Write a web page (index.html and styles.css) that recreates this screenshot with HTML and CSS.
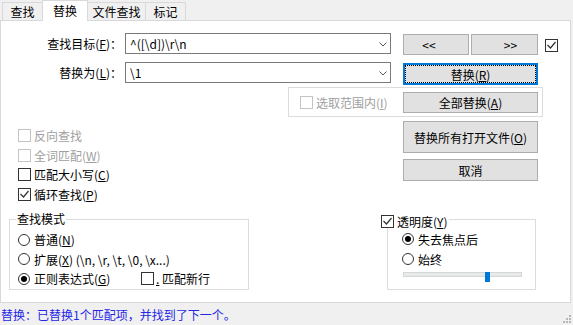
FILE: index.html
```html
<!DOCTYPE html>
<html lang="zh-CN">
<head>
    <meta charset="UTF-8">
    <title>替换</title>
    <link rel="stylesheet" href="styles.css">
</head>
<body>

<div class="tabs">
    <div class="tab tab-find">查找</div>
    <div class="tab tab-replace active">替换</div>
    <div class="tab tab-files">文件查找</div>
    <div class="tab tab-mark">标记</div>
</div>

<div class="panel">
    <div class="row row-find">
        <label class="field-label">查找目标(<u>F</u>)：</label>
        <div class="combo">
            <span class="combo-text">^([\d])\r\n</span>
            <svg class="chevron" width="8" height="5" viewBox="0 0 8 5"><polyline points="0.5,0.5 4,4 7.5,0.5" fill="none" stroke="#555" stroke-width="1"/></svg>
        </div>
        <button class="btn btn-prev">&lt;&lt;</button>
        <button class="btn btn-next">&gt;&gt;</button>
        <span class="box nav-check">
            <svg width="11" height="11" viewBox="0 0 11 11"><polyline points="1.5,5 4.5,8 9.5,2" fill="none" stroke="#333" stroke-width="1.2"/></svg>
        </span>
    </div>

    <div class="row row-replace">
        <label class="field-label">替换为(<u>L</u>)：</label>
        <div class="combo">
            <span class="combo-text">\1</span>
            <svg class="chevron" width="8" height="5" viewBox="0 0 8 5"><polyline points="0.5,0.5 4,4 7.5,0.5" fill="none" stroke="#555" stroke-width="1"/></svg>
        </div>
        <button class="btn btn-replace">替换(<u>R</u>)</button>
    </div>

    <div class="main">
        <div class="left">
            <div class="check-row disabled"><span class="box"></span>反向查找</div>
            <div class="check-row disabled"><span class="box"></span>全词匹配(<u>W</u>)</div>
            <div class="check-row"><span class="box"></span>匹配大小写(<u>C</u>)</div>
            <div class="check-row">
                <span class="box"><svg width="11" height="11" viewBox="0 0 11 11"><polyline points="1.5,5 4.5,8 9.5,2" fill="none" stroke="#333" stroke-width="1.2"/></svg></span>循环查找(<u>P</u>)
            </div>

            <div class="group-title">查找模式</div>
            <div class="mode-box">
                <div class="opt-row"><span class="radio"></span>普通(<u>N</u>)</div>
                <div class="opt-row"><span class="radio"></span>扩展(<u>X</u>) (\n, \r, \t, \0, \x...)</div>
                <div class="opt-row">
                    <span class="opt-regex"><span class="radio on"></span>正则表达式(<u>G</u>)</span>
                    <span class="box box-newline"></span><u>.</u>&nbsp;匹配新行
                </div>
            </div>
        </div>

        <div class="right">
            <div class="range-box">
                <span class="range-check disabled"><span class="box"></span>选取范围内(<u>I</u>)</span>
                <button class="btn btn-all">全部替换(<u>A</u>)</button>
            </div>
            <button class="btn btn-openall">替换所有打开文件(<u>O</u>)</button>
            <button class="btn btn-cancel">取消</button>

            <div class="trans">
                <div class="trans-head">
                    <span class="box"><svg width="11" height="11" viewBox="0 0 11 11"><polyline points="1.5,5 4.5,8 9.5,2" fill="none" stroke="#333" stroke-width="1.2"/></svg></span>透明度(<u>Y</u>)
                </div>
                <div class="trans-box">
                    <div class="trans-row"><span class="radio on"></span>失去焦点后</div>
                    <div class="trans-row"><span class="radio"></span>始终</div>
                    <div class="slider">
                        <div class="track"></div>
                        <div class="thumb" style="left: 82px;"></div>
                    </div>
                </div>
            </div>
        </div>
    </div>
</div>

<div class="status">
    <span>替换：已替换1个匹配项，并找到了下一个。</span>
    <svg class="grip" width="10" height="10" viewBox="0 0 10 10">
        <rect x="6" y="0" width="2" height="2" fill="#b8b8b8"/>
        <rect x="3" y="3" width="2" height="2" fill="#b8b8b8"/>
        <rect x="6" y="3" width="2" height="2" fill="#b8b8b8"/>
        <rect x="0" y="6" width="2" height="2" fill="#b8b8b8"/>
        <rect x="3" y="6" width="2" height="2" fill="#b8b8b8"/>
        <rect x="6" y="6" width="2" height="2" fill="#b8b8b8"/>
    </svg>
</div>

</body>
</html>
```

FILE: styles.css
```css
* { box-sizing: border-box; }
body { margin: 0; width: 573px; height: 325px; overflow: hidden; background: #f0f0f0; color: #000; font-family: "Noto Sans CJK SC", sans-serif; font-size: 12px; }
u { text-underline-offset: 1px; }

/* tabs */
.tabs { display: flex; align-items: flex-end; height: 20px; padding-left: 2px; }
.tab { height: 18px; margin-left: -1px; border: 1px solid #d9d9d9; border-bottom: none; background: #f0f0f0; text-align: center; line-height: 18px; }
.tab-find { width: 41px; margin-left: 0; }
.tab-replace { width: 46px; }
.tab-files { width: 59px; }
.tab-mark { width: 41px; }
.tab.active { height: 21px; margin-bottom: -1px; background: #fff; line-height: 19px; position: relative; z-index: 1; }

.panel { width: 571px; height: 283px; border: 1px solid #d9d9d9; background: #fff; }

/* top rows */
.row { display: flex; align-items: flex-start; height: 21px; }
.row-find { margin-top: 12px; }
.row-replace { margin-top: 8px; }
.field-label { width: 124px; padding-right: 3px; text-align: right; line-height: 21px; }
.combo { display: flex; align-items: center; justify-content: space-between; width: 266px; height: 21px; padding: 0 3px 0 4px; border: 1px solid #7a7a7a; background: #fff; line-height: 19px; }
.chevron { margin-top: 1px; }

.btn { display: block; height: 21px; padding: 0; border: 1px solid #adadad; background: #e1e1e1; color: #000; font: inherit; line-height: 17px; }
.btn-prev { width: 66px; margin: 1px 0 0 12px; padding-right: 14px; }
.btn-next { width: 67px; margin: 1px 0 0 2px; padding-left: 12px; }
.nav-check { margin: 6px 0 0 7px; }
.btn-replace { width: 135px; height: 22px; margin: 1px 0 0 12px; border: 2px solid #0078d7; outline: 1px dotted #000; outline-offset: -3px; }

/* checkboxes and radios */
.box { display: flex; align-items: center; justify-content: center; flex: none; width: 13px; height: 13px; margin-right: 3px; border: 1px solid #333; background: #fff; }
.radio { display: flex; align-items: center; justify-content: center; flex: none; width: 12px; height: 12px; margin-right: 4px; border: 1px solid #333; border-radius: 50%; background: #fff; }
.radio.on::after { content: ""; width: 6px; height: 6px; border-radius: 50%; background: #000; }
.disabled { color: #a0a0a0; }
.disabled .box { border-color: #c4c4c4; }

.main { display: flex; }
.left { width: 287px; padding-top: 43px; }
.right { width: 282px; }

.check-row { display: flex; align-items: center; height: 19.5px; padding-left: 17px; }

.group-title { position: relative; z-index: 1; width: fit-content; margin: 8px 0 0 15px; padding: 0 1px; background: #fff; line-height: 14px; }
.mode-box { width: 240px; height: 71px; margin: -7px 0 0 8px; padding: 10px 0 0 8px; border: 1px solid #dcdcdc; }
.opt-row { display: flex; align-items: center; height: 19.5px; white-space: nowrap; }
.opt-regex { display: flex; align-items: center; width: 123px; }
.box-newline { margin-right: 2px; }

/* right column */
.range-box { display: flex; align-items: center; justify-content: space-between; width: 255px; height: 30px; margin-top: 4px; padding: 0 4px 0 11px; border: 1px solid #dcdcdc; }
.range-check { display: flex; align-items: center; }
.btn-all { width: 135px; }
.btn-openall { width: 135px; height: 32px; margin: 4px 0 0 115px; }
.btn-cancel { width: 135px; height: 22px; margin: 6px 0 0 115px; }

.trans { margin: 33px 0 0 93px; }
.trans-head { display: flex; align-items: center; position: relative; z-index: 1; width: fit-content; height: 14px; padding-right: 1px; background: #fff; }
.trans-box { width: 149px; height: 71px; margin: -9px 0 0 6px; padding: 9px 0 0 14px; border: 1px solid #dcdcdc; }
.trans-row { display: flex; align-items: center; height: 20px; }
.slider { position: relative; width: 119px; height: 10px; margin: 3px 0 0 1px; }
.track { height: 5px; margin-top: 3px; border: 1px solid #d6d6d6; background: #e7eaea; }
.thumb { position: absolute; top: 0; width: 5px; height: 10px; background: #0078d7; }

/* status bar */
.status { display: flex; align-items: center; justify-content: space-between; height: 22px; padding-left: 1px; color: #2626e6; }
.grip { align-self: flex-end; }
```
